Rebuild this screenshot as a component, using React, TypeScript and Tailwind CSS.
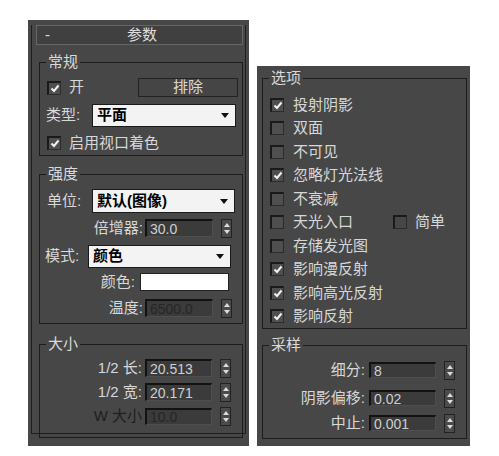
import React from "react";

const FONT = "font-['Liberation_Sans','Noto_Sans_CJK_SC',sans-serif]";

const Check = ({ checked, plain }: { checked?: boolean; plain?: boolean }) => (
    <span className={`flex items-center justify-center w-[14px] h-[14px] shrink-0 border-t-2 border-l-2 border-b border-r border-t-[#1a1a1a] border-l-[#1a1a1a] border-b-[#2c2c2c] border-r-[#2c2c2c] ${plain ? "bg-[#474747]" : "bg-[#4f4f4f]"}`}>
        {checked && (
            <svg width="10" height="9" viewBox="0 0 10 9">
                <polyline points="1.5,4.5 4,7 8.5,1.5" fill="none" stroke="#f2f2f2" strokeWidth="2" />
            </svg>
        )}
    </span>
);

const Spinner = () => (
    <span className="flex flex-col items-center justify-center gap-[3px] w-[11px] h-[19px] shrink-0 border border-[#222] bg-[#4b4b4b]">
        <svg width="6" height="4" viewBox="0 0 6 4"><polygon points="3,0 6,4 0,4" fill="#dcdcdc" /></svg>
        <svg width="6" height="4" viewBox="0 0 6 4"><polygon points="0,0 6,0 3,4" fill="#dcdcdc" /></svg>
    </span>
);

const Field = ({ value, w, dim }: { value: string; w: string; dim?: boolean }) => (
    <span className={`flex items-center h-full ${w} pl-[3px] bg-[#3b3b3b] border-t-2 border-l-2 border-t-[#121212] border-l-[#121212] border-b border-r border-b-[#4e4e4e] border-r-[#4e4e4e] text-[14px] leading-none ${dim ? "text-[#262626]" : "text-[#cfcfcf]"}`}>
        {value}
    </span>
);

const Dropdown = ({ value, w }: { value: string; w: string }) => (
    <span className={`flex items-center justify-between h-full ${w} pl-[4px] pr-[6px] bg-[#f3f3f3] border border-[#1a1a1a] text-black font-bold text-[15px]`}>
        {value}
        <svg width="8" height="5" viewBox="0 0 8 5"><polygon points="0,0 8,0 4,5" fill="#111" /></svg>
    </span>
);

const Group = ({ title, className, children }: { title: string; className: string; children: React.ReactNode }) => (
    <fieldset className={`border border-[#1c1c1c] p-0 m-0 ${className}`}>
        <legend className="ml-[6px] px-[2px] text-[15px] leading-[18px] text-[#dadada]">{title}</legend>
        {children}
    </fieldset>
);

type SpinRowProps = {
    label: string;
    value: string;
    labelW: string;
    fieldW: string;
    gap: string;
    h: string;
    mt: string;
    dimLabel?: boolean;
    dimValue?: boolean;
};

const SpinRow = ({ label, value, labelW, fieldW, gap, h, mt, dimLabel, dimValue }: SpinRowProps) => (
    <div className={`flex items-center ${h} ${mt}`}>
        <span className={`${labelW} text-right ${dimLabel ? "text-[#1e1e1e]" : ""}`}>{label}</span>
        <span className={`flex h-full ${gap}`}>
            <Field value={value} w={fieldW} dim={dimValue} />
        </span>
        <span className="ml-[8px]"><Spinner /></span>
    </div>
);

const options: { label: string; checked: boolean }[] = [
    { label: "投射阴影", checked: true },
    { label: "双面", checked: false },
    { label: "不可见", checked: false },
    { label: "忽略灯光法线", checked: true },
    { label: "不衰减", checked: false },
    { label: "天光入口", checked: false },
    { label: "存储发光图", checked: false },
    { label: "影响漫反射", checked: true },
    { label: "影响高光反射", checked: true },
    { label: "影响反射", checked: true },
];

export default function App() {
    return (
        <div className={`flex items-start w-[499px] h-[456px] bg-white pl-[28px] pt-[20px] text-[15px] text-[#d8d8d8] ${FONT}`}>
            {/* left rollout */}
            <div className="w-[221px] h-[426px] bg-[#474747] px-[3px] pt-[15px]">
                <div className="h-[409px] border border-[#1e1e1e] border-t-0">
                    <div className="flex items-center h-[20px] -mt-[10px] ml-[4px] mr-[2px] border border-[#666] bg-[#404040] text-[#dedede]">
                        <span className="w-[20px] pl-[8px]">-</span>
                        <span className="flex-1 text-center pr-[15px]">参数</span>
                    </div>

                    <Group title="常规" className="w-[204px] ml-[7px] mt-[8px] pb-[1px]">
                        <div className="flex items-center h-[19px] mt-[7px] pl-[7px]">
                            <Check checked />
                            <span className="ml-[8px]">开</span>
                            <span className="flex items-center justify-center ml-auto mr-[4px] w-[100px] h-full border border-[#222] bg-[#454545]">排除</span>
                        </div>
                        <div className="flex items-center h-[23px] mt-[7px] pl-[6px]">
                            <span className="w-[46px]">类型:</span>
                            <Dropdown value="平面" w="w-[144px]" />
                        </div>
                        <div className="flex items-center h-[22px] mt-[5px] pl-[7px]">
                            <Check checked />
                            <span className="ml-[8px]">启用视口着色</span>
                        </div>
                    </Group>

                    <Group title="强度" className="w-[204px] ml-[7px] mt-[9px] pb-[6px]">
                        <div className="flex items-center h-[24px] mt-[6px] pl-[7px]">
                            <span className="w-[45px]">单位:</span>
                            <Dropdown value="默认(图像)" w="w-[143px]" />
                        </div>
                        <SpinRow label="倍增器:" value="30.0" labelW="w-[103px]" fieldW="w-[68px]" gap="ml-[2px]" h="h-[18px]" mt="mt-[6px]" />
                        <div className="flex items-center h-[23px] mt-[8px] pl-[5px]">
                            <span className="w-[43px]">模式:</span>
                            <Dropdown value="颜色" w="w-[143px]" />
                        </div>
                        <div className="flex items-center h-[18px] mt-[5px]">
                            <span className="w-[95px] text-right">颜色:</span>
                            <span className="ml-[5px] w-[89px] h-full bg-white border border-[#222]" />
                        </div>
                        <SpinRow label="温度:" value="6500.0" labelW="w-[103px]" fieldW="w-[68px]" gap="ml-[2px]" h="h-[18px]" mt="mt-[8px]" dimValue />
                    </Group>

                    <Group title="大小" className="w-[204px] ml-[7px] mt-[11px] pb-[12px]">
                        <SpinRow label="1/2 长:" value="20.513" labelW="w-[102px]" fieldW="w-[67px]" gap="ml-[3px]" h="h-[18px]" mt="mt-[6px]" />
                        <SpinRow label="1/2 宽:" value="20.171" labelW="w-[102px]" fieldW="w-[67px]" gap="ml-[3px]" h="h-[18px]" mt="mt-[6px]" />
                        <SpinRow label="W 大小" value="10.0" labelW="w-[102px]" fieldW="w-[67px]" gap="ml-[3px]" h="h-[17px]" mt="mt-[7px]" dimLabel dimValue />
                    </Group>
                </div>
            </div>

            {/* right rollout */}
            <div className="w-[213px] h-[380px] ml-[8px] mt-[46px] bg-[#474747] pt-[3px]">
                <Group title="选项" className="w-[205px] ml-[5px] pt-[6px]">
                    {options.map((o) => (
                        <div key={o.label} className="flex items-center h-[23.5px] pl-[7px]">
                            <Check checked={o.checked} />
                            {o.label === "天光入口" ? (
                                <>
                                    <span className="ml-[9px] w-[100px]">{o.label}</span>
                                    <Check plain />
                                    <span className="ml-[8px]">简单</span>
                                </>
                            ) : (
                                <span className="ml-[9px]">{o.label}</span>
                            )}
                        </div>
                    ))}
                </Group>

                <Group title="采样" className="w-[205px] ml-[5px] mt-[7px] pb-[7px]">
                    <SpinRow label="细分:" value="8" labelW="w-[102px]" fieldW="w-[67px]" gap="ml-[4px]" h="h-[16px]" mt="mt-[8px]" />
                    <SpinRow label="阴影偏移:" value="0.02" labelW="w-[102px]" fieldW="w-[67px]" gap="ml-[4px]" h="h-[16px]" mt="mt-[12px]" />
                    <SpinRow label="中止:" value="0.001" labelW="w-[102px]" fieldW="w-[67px]" gap="ml-[4px]" h="h-[16px]" mt="mt-[9px]" />
                </Group>
            </div>
        </div>
    );
}
